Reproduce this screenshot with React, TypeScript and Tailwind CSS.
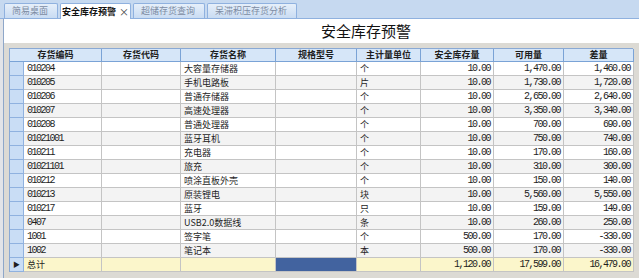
import React from 'react';

const rows = [
  ['010204', '大容量存储器', '个', '10.00', '1,470.00', '1,460.00'],
  ['010205', '手机电路板', '片', '10.00', '1,730.00', '1,720.00'],
  ['010206', '普通存储器', '个', '10.00', '2,650.00', '2,640.00'],
  ['010207', '高速处理器', '个', '10.00', '3,350.00', '3,340.00'],
  ['010208', '普通处理器', '个', '10.00', '700.00', '690.00'],
  ['01021001', '蓝牙耳机', '个', '10.00', '750.00', '740.00'],
  ['010211', '充电器', '个', '10.00', '170.00', '160.00'],
  ['01021101', '旅充', '个', '10.00', '310.00', '300.00'],
  ['010212', '喷涂直板外壳', '个', '10.00', '150.00', '140.00'],
  ['010213', '原装锂电', '块', '10.00', '5,560.00', '5,550.00'],
  ['010217', '蓝牙', '只', '10.00', '159.00', '149.00'],
  ['0407', 'USB2.0数据线', '条', '10.00', '260.00', '250.00'],
  ['1001', '签字笔', '个', '500.00', '170.00', '-330.00'],
  ['1002', '笔记本', '本', '500.00', '170.00', '-330.00'],
];

const headers = ['存货编码', '存货代码', '存货名称', '规格型号', '主计量单位', '安全库存量', '可用量', '差量'];

const tabs = [
  { label: '简易桌面', w: 'w-[54px]' },
  { label: '安全库存预警', w: 'w-[71px]', active: true },
  { label: '超储存货查询', w: 'w-[72px]' },
  { label: '呆滞积压存货分析', w: 'w-[90px]' },
];

const cols = 'grid grid-cols-[14px_78px_79px_95px_81px_64px_73px_70px_70px]';
const cell = 'h-[14px] border-r border-b border-[#c4c4c4] flex items-center overflow-hidden whitespace-nowrap';
const mono = 'font-["Liberation_Mono",monospace] text-[10px] tracking-[-1.5px]';
const num = `justify-end pr-[3px] ${mono}`;

export default function App() {
  return (
    <div className="w-[639px] h-[278px] overflow-hidden flex flex-col bg-[#c6d9f0] text-[#1e1e1e] font-['Noto_Sans_CJK_SC',sans-serif] text-[9px]">
      {/* tab strip */}
      <div className="h-[19px] flex items-end gap-[2px] pl-[4px] border-b border-[#8fb1df]">
        {tabs.map((t) =>
          t.active ? (
            <div
              key={t.label}
              className={`${t.w} h-[16px] -mb-px bg-white border border-b-0 border-[#8fb1df] rounded-t-[2px] flex items-center justify-center gap-[3px] font-bold text-[#111]`}
            >
              {t.label}
              <span className="font-normal text-[#444] text-[10px] leading-none">×</span>
            </div>
          ) : (
            <div
              key={t.label}
              className={`${t.w} h-[15px] bg-gradient-to-b from-[#e6effa] to-[#c9dcf3] border border-b-0 border-[#8fb1df] rounded-t-[2px] flex items-center pl-[7px] text-[#7d8ca3]`}
            >
              {t.label}
            </div>
          )
        )}
      </div>

      <div className="flex-1 flex min-h-0">
        <div className="w-[4px] bg-[#e2e4e8] border-r border-[#8ea7c9]" />
        <div className="flex-1 flex flex-col min-w-0">
          <div className="h-[24px] bg-white flex items-center pl-[317px] text-[15px] text-[#111]">安全库存预警</div>
          <div className="flex-1 bg-[#dcdad4] pt-[5px] pl-[5px]">
            <div className={`${cols} w-[624px] border-l border-t border-[#8aa9d4] bg-white`}>
              {/* header */}
              <div className="col-span-2 h-[13px] bg-[#d6e6f8] border-r border-b border-[#7aa3d6] flex items-center justify-center font-bold">
                {headers[0]}
              </div>
              {headers.slice(1).map((h) => (
                <div key={h} className="h-[13px] bg-[#d6e6f8] border-r border-b border-[#7aa3d6] flex items-center justify-center font-bold">
                  {h}
                </div>
              ))}

              {rows.map((r, i) => {
                const bg = i % 2 === 1 ? 'bg-[#f3f3f3]' : 'bg-white';
                return (
                  <React.Fragment key={r[0]}>
                    <div className="h-[14px] bg-[#c9ddf5] border-r border-b border-[#8fb1df]" />
                    <div className={`${cell} ${bg} pl-[3px] ${mono}`}>{r[0]}</div>
                    <div className={`${cell} ${bg}`} />
                    <div className={`${cell} ${bg} pl-[3px]`}>{r[1]}</div>
                    <div className={`${cell} ${bg}`} />
                    <div className={`${cell} ${bg} pl-[3px]`}>{r[2]}</div>
                    <div className={`${cell} ${bg} ${num}`}>{r[3]}</div>
                    <div className={`${cell} ${bg} ${num}`}>{r[4]}</div>
                    <div className={`${cell} ${bg} ${num}`}>{r[5]}</div>
                  </React.Fragment>
                );
              })}

              {/* total row */}
              <div className="h-[14px] bg-[#c9ddf5] border-r border-b border-[#8fb1df] flex items-center justify-center text-[7px] leading-none">▶</div>
              <div className={`${cell} bg-[#fbf6cb] pl-[3px]`}>总计</div>
              <div className={`${cell} bg-[#fbf6cb]`} />
              <div className={`${cell} bg-[#fbf6cb]`} />
              <div className={`${cell} bg-[#42639f]`} />
              <div className={`${cell} bg-[#fbf6cb]`} />
              <div className={`${cell} bg-[#fbf6cb] ${num}`}>1,120.00</div>
              <div className={`${cell} bg-[#fbf6cb] ${num}`}>17,599.00</div>
              <div className={`${cell} bg-[#fbf6cb] ${num}`}>16,479.00</div>
            </div>
          </div>
        </div>
      </div>
    </div>
  );
}
